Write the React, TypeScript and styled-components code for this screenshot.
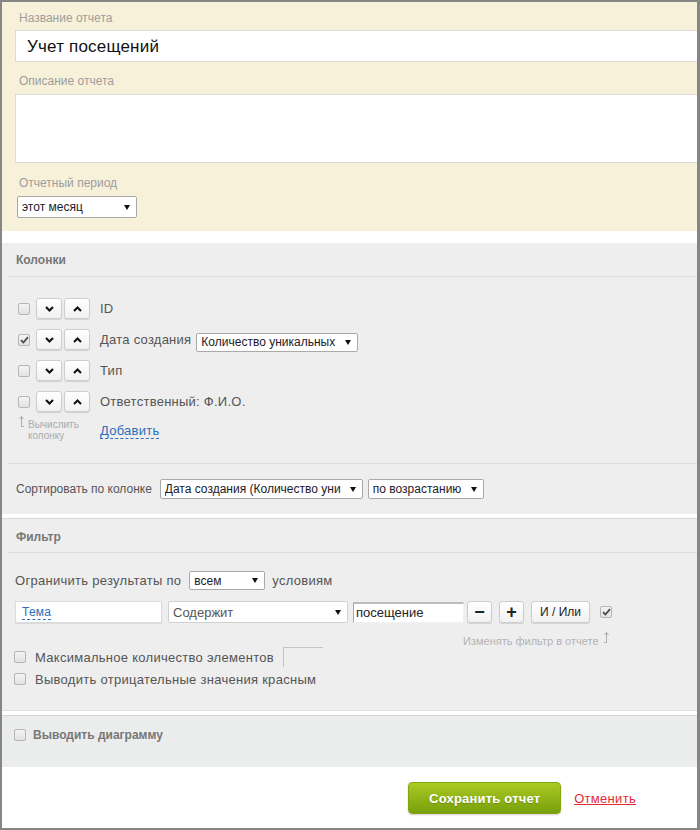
import React from 'react';
import styled, { createGlobalStyle } from 'styled-components';

const GlobalStyle = createGlobalStyle`
  html, body { margin: 0; padding: 0; background: #fff; }
  body { font-family: "Liberation Sans", Arial, sans-serif; }
  * { box-sizing: border-box; }
`;

const Frame = styled.div`
  width: 700px;
  height: 830px;
  border-style: solid;
  border-color: #868686;
  border-width: 2px 3px 2px 2px;
  display: flex;
  flex-direction: column;
  overflow: hidden;
  background: #fff;
`;

/* ---------- top (beige) block ---------- */
const TopSection = styled.section`
  background: #f8f1da;
  padding: 8px 0 13px 13px;
  display: flex;
  flex-direction: column;
  align-items: flex-start;
`;

const FieldLabel = styled.div<{ $top: number }>`
  margin-top: ${p => p.$top}px;
  padding-left: 4px;
  font-size: 12px;
  line-height: 16px;
  color: #9d9d9d;
`;

const TitleField = styled.div`
  width: 100%;
  height: 32px;
  margin-top: 4px;
  background: #fff;
  border: 1px solid #dedbd3;
  border-right: none;
  padding: 2px 0 0 11px;
  display: flex;
  align-items: center;
  font-size: 17px;
  letter-spacing: 0.2px;
  color: #111;
`;

const DescField = styled.div`
  width: 100%;
  height: 69px;
  margin-top: 5px;
  background: #fff;
  border: 1px solid #dedbd3;
  border-right: none;
`;

/* ---------- fake select ---------- */
const SelectBox = styled.div<{ $w: number; $h: number; $fs?: number; $color?: string; $border?: string; $ml?: number; $mt?: number }>`
  width: ${p => p.$w}px;
  height: ${p => p.$h}px;
  margin-left: ${p => p.$ml ?? 0}px;
  margin-top: ${p => p.$mt ?? 0}px;
  flex: none;
  display: flex;
  align-items: center;
  background: #fff;
  border: 1px solid ${p => p.$border ?? '#a9a9a9'};
  border-radius: 2px;
  padding: 0 6px 0 4px;
  font-size: ${p => p.$fs ?? 12}px;
  color: ${p => p.$color ?? '#1d1a2a'};
  white-space: nowrap;
  overflow: hidden;
`;

const SelectText = styled.span`
  flex: 1;
  min-width: 0;
  overflow: hidden;
`;

const CaretIcon = styled.svg`
  flex: none;
  margin-left: 4px;
`;

const Caret = () => (
  <CaretIcon width="6" height="5" viewBox="0 0 6 5">
    <path d="M0 0H6L3 5Z" fill="#111" />
  </CaretIcon>
);

const Select: React.FC<{ w: number; h: number; text: string; fs?: number; color?: string; border?: string; ml?: number; mt?: number }> = ({ w, h, text, fs, color, border, ml, mt }) => (
  <SelectBox $w={w} $h={h} $fs={fs} $color={color} $border={border} $ml={ml} $mt={mt}>
    <SelectText>{text}</SelectText>
    <Caret />
  </SelectBox>
);

/* ---------- checkbox ---------- */
const CheckBoxBox = styled.span`
  flex: none;
  width: 12px;
  height: 12px;
  border: 1px solid #b6b6b6;
  border-radius: 2px;
  background: linear-gradient(#f4f4f4, #e2e2e2);
  display: flex;
  align-items: center;
  justify-content: center;
`;

const CheckBox: React.FC<{ checked?: boolean }> = ({ checked }) => (
  <CheckBoxBox>
    {checked && (
      <svg width="9" height="8" viewBox="0 0 9 8">
        <path d="M1 4.2L3.4 6.5L8 1.2" fill="none" stroke="#4a4a4a" strokeWidth="1.8" />
      </svg>
    )}
  </CheckBoxBox>
);

/* ---------- panels ---------- */
const Panel = styled.section<{ $gap: number; $bg?: string; $borderTop?: string; $borderBottom?: string; $pb?: number }>`
  margin-top: ${p => p.$gap}px;
  background: ${p => p.$bg ?? '#eeeeee'};
  border-top: ${p => (p.$borderTop ? `1px solid ${p.$borderTop}` : 'none')};
  border-bottom: ${p => (p.$borderBottom ? `1px solid ${p.$borderBottom}` : 'none')};
  padding: 0 0 ${p => p.$pb ?? 0}px 6px;
`;

const PanelHeading = styled.h3<{ $pt: number; $pb: number }>`
  margin: 0;
  padding: ${p => p.$pt}px 0 ${p => p.$pb}px 8px;
  font-size: 12px;
  line-height: 14px;
  font-weight: bold;
  color: #777;
  border-bottom: 1px solid #dadada;
`;

/* ---------- columns ---------- */
const ColumnList = styled.div`
  padding: 16px 0 0 10px;
  display: flex;
  flex-direction: column;
`;

const ColumnRow = styled.div`
  height: 31px;
  display: flex;
  align-items: center;
`;

const OrderButtons = styled.div`
  display: flex;
  gap: 2px;
  margin: 0 10px 0 6px;
`;

const SmallButton = styled.span<{ $w: number; $h?: number; $fs?: number }>`
  flex: none;
  width: ${p => p.$w}px;
  height: ${p => p.$h ?? 21}px;
  display: flex;
  align-items: center;
  justify-content: center;
  border: 1px solid #cdcdcd;
  border-radius: 3px;
  background: linear-gradient(#ffffff, #f1f1f1);
  box-shadow: 0 1px 1px rgba(0, 0, 0, 0.12);
  font-size: ${p => p.$fs ?? 12}px;
  color: #222;
`;

const Chevron: React.FC<{ up?: boolean }> = ({ up }) => (
  <svg width="9" height="6" viewBox="0 0 9 6">
    <path d={up ? 'M1 5L4.5 1.5L8 5' : 'M1 1L4.5 4.5L8 1'} fill="none" stroke="#111" strokeWidth="2.1" />
  </svg>
);

const ColumnName = styled.span`
  font-size: 13px;
  letter-spacing: 0.25px;
  color: #555;
`;

const AddRow = styled.div`
  display: flex;
  align-items: flex-start;
  padding-left: 10px;
  height: 24px;
`;

const CalcHint = styled.div`
  width: 82px;
  display: flex;
  align-items: flex-start;
  font-size: 10px;
  line-height: 11px;
  color: #ababab;
`;

const HintArrowIcon = styled.svg<{ $mt?: number }>`
  flex: none;
  margin-top: ${p => p.$mt ?? 0}px;
`;

const CalcHintText = styled.div`
  padding-top: 2px;
`;

const DashedLink = styled.a<{ $fs: number; $mt?: number }>`
  display: inline-block;
  margin-top: ${p => p.$mt ?? 0}px;
  font-size: ${p => p.$fs}px;
  line-height: ${p => p.$fs + 2}px;
  letter-spacing: 0.25px;
  color: #2b6fbd;
  text-decoration: none;
  border-bottom: 1px dashed #2b6fbd;
`;

const SortBlock = styled.div`
  margin-top: 22px;
  border-top: 1px solid #dadada;
  padding: 15px 0 15px 8px;
  display: flex;
  align-items: center;
`;

const PlainText = styled.span<{ $fs: number; $mr?: number; $ml?: number }>`
  font-size: ${p => p.$fs}px;
  letter-spacing: ${p => (p.$fs >= 13 ? 0.28 : 0)}px;
  color: #555;
  margin-right: ${p => p.$mr ?? 0}px;
  margin-left: ${p => p.$ml ?? 0}px;
  white-space: nowrap;
`;

/* ---------- filter ---------- */
const FilterBody = styled.div`
  padding-left: 7px;
  display: flex;
  flex-direction: column;
`;

const LimitRow = styled.div`
  margin-top: 18px;
  height: 19px;
  display: flex;
  align-items: center;
`;

const FilterRow = styled.div`
  margin-top: 11px;
  height: 22px;
  display: flex;
  align-items: center;
`;

const FieldBox = styled.div`
  width: 147px;
  height: 22px;
  flex: none;
  background: #fff;
  border: 1px solid #dcdcdc;
  box-shadow: 0 1px 1px rgba(0, 0, 0, 0.08);
  padding-left: 6px;
  display: flex;
  align-items: center;
`;

const ValueInput = styled.div`
  width: 111px;
  height: 21px;
  flex: none;
  margin-left: 5px;
  background: #fff;
  border-style: solid;
  border-width: 2px 1px 1px 1px;
  border-color: #bcbcbc #f2f2f2 #f2f2f2 #a9a9a9;
  padding-left: 2px;
  display: flex;
  align-items: center;
  font-size: 13px;
  color: #222;
`;

const ButtonGroup = styled.div`
  display: flex;
  gap: 7px;
  margin-left: 3px;
  margin-right: 10px;
`;

const HintRow = styled.div`
  margin-top: 8px;
  margin-left: 448px;
  height: 16px;
  display: flex;
  align-items: flex-start;
  gap: 1px;
`;

const HintText = styled.span`
  margin-top: 4px;
  font-size: 11px;
  line-height: 12px;
  color: #b3b3b3;
`;

const OptionRow = styled.div<{ $mt: number }>`
  margin-top: ${p => p.$mt}px;
  height: 20px;
  display: flex;
  align-items: center;
  margin-left: -1px;
`;

const CountInput = styled.span`
  width: 40px;
  height: 20px;
  margin-left: 9px;
  border-top: 1px solid #c4c4c4;
  border-left: 1px solid #c4c4c4;
`;

/* ---------- diagram ---------- */
const DiagramRow = styled.div`
  padding: 12px 0 25px 6px;
  display: flex;
  align-items: center;
  gap: 7px;
`;

const DiagramLabel = styled.span`
  font-size: 12px;
  line-height: 14px;
  font-weight: bold;
  color: #777;
`;

/* ---------- footer ---------- */
const Footer = styled.footer`
  flex: 1;
  display: flex;
  align-items: flex-start;
  justify-content: flex-end;
  padding: 15px 61px 0 0;
  gap: 13px;
`;

const SaveButton = styled.span`
  width: 153px;
  height: 32px;
  display: flex;
  align-items: center;
  justify-content: center;
  border-radius: 4px;
  border: 1px solid #84a512;
  background: linear-gradient(#abca22, #77a00c);
  box-shadow: 0 1px 2px rgba(0, 0, 0, 0.2);
  color: #fff;
  font-size: 13px;
  font-weight: bold;
  letter-spacing: 0.2px;
  text-shadow: 0 1px 1px rgba(0, 0, 0, 0.2);
`;

const CancelLink = styled.a`
  height: 32px;
  display: flex;
  align-items: center;
  font-size: 13px;
  letter-spacing: 0.3px;
  color: #e32b33;
  text-decoration: underline;
`;

const UpHook: React.FC<{ side: 'left' | 'right'; mt?: number }> = ({ side, mt }) => (
  <HintArrowIcon width="10" height="13" viewBox="0 0 10 13" $mt={mt}>
    {side === 'right' ? (
      <path d="M3.5 1.5V11.5H6M1.5 4L3.5 1.5L5.5 4" fill="none" stroke="#ababab" strokeWidth="1" />
    ) : (
      <path d="M6.5 1.5V11.5H4M4.5 4L6.5 1.5L8.5 4" fill="none" stroke="#ababab" strokeWidth="1" />
    )}
  </HintArrowIcon>
);

const columns = [
  { name: 'ID', checked: false },
  { name: 'Дата создания', checked: true, select: 'Количество уникальных' },
  { name: 'Тип', checked: false },
  { name: 'Ответственный: Ф.И.О.', checked: false },
];

export default function App() {
  return (
    <>
      <GlobalStyle />
      <Frame>
        <TopSection>
          <FieldLabel $top={0}>Название отчета</FieldLabel>
          <TitleField>Учет посещений</TitleField>
          <FieldLabel $top={11}>Описание отчета</FieldLabel>
          <DescField />
          <FieldLabel $top={12}>Отчетный период</FieldLabel>
          <Select w={120} h={22} text="этот месяц" ml={2} mt={5} />
        </TopSection>

        <Panel $gap={12}>
          <PanelHeading $pt={10} $pb={9}>Колонки</PanelHeading>
          <ColumnList>
            {columns.map(c => (
              <ColumnRow key={c.name}>
                <CheckBox checked={c.checked} />
                <OrderButtons>
                  <SmallButton $w={26}><Chevron /></SmallButton>
                  <SmallButton $w={26}><Chevron up /></SmallButton>
                </OrderButtons>
                <ColumnName>{c.name}</ColumnName>
                {c.select && <Select w={162} h={19} text={c.select} ml={5} mt={5} />}
              </ColumnRow>
            ))}
          </ColumnList>
          <AddRow>
            <CalcHint>
              <UpHook side="right" mt={-2} />
              <CalcHintText>Вычислить<br />колонку</CalcHintText>
            </CalcHint>
            <DashedLink $fs={13} $mt={6}>Добавить</DashedLink>
          </AddRow>
          <SortBlock>
            <PlainText $fs={12} $mr={8}>Сортировать по колонке</PlainText>
            <Select w={203} h={20} text="Дата создания (Количество уни" />
            <Select w={116} h={20} text="по возрастанию" ml={5} />
          </SortBlock>
        </Panel>

        <Panel $gap={4} $borderTop="#d8d8d8" $borderBottom="#dfe2e2" $pb={21}>
          <PanelHeading $pt={11} $pb={8}>Фильтр</PanelHeading>
          <FilterBody>
            <LimitRow>
              <PlainText $fs={13} $mr={8}>Ограничить результаты по</PlainText>
              <Select w={76} h={19} text="всем" />
              <PlainText $fs={13} $ml={7}>условиям</PlainText>
            </LimitRow>
            <FilterRow>
              <FieldBox><DashedLink $fs={12}>Тема</DashedLink></FieldBox>
              <Select w={180} h={22} text="Содержит" fs={13} color="#555" border="#d0d0d0" ml={6} />
              <ValueInput>посещение</ValueInput>
              <ButtonGroup>
                <SmallButton $w={25} $h={22} $fs={18}><b>−</b></SmallButton>
                <SmallButton $w={25} $h={22} $fs={18}><b>+</b></SmallButton>
                <SmallButton $w={59} $h={22} $fs={12}>И / Или</SmallButton>
              </ButtonGroup>
              <CheckBox checked />
            </FilterRow>
            <HintRow>
              <HintText>Изменять фильтр в отчете</HintText>
              <UpHook side="left" />
            </HintRow>
            <OptionRow $mt={0}>
              <CheckBox />
              <PlainText $fs={13} $ml={9}>Максимальное количество элементов</PlainText>
              <CountInput />
            </OptionRow>
            <OptionRow $mt={2}>
              <CheckBox />
              <PlainText $fs={13} $ml={9}>Выводить отрицательные значения красным</PlainText>
            </OptionRow>
          </FilterBody>
        </Panel>

        <Panel $gap={4} $bg="#ebeded" $borderTop="#d4d8d8">
          <DiagramRow>
            <CheckBox />
            <DiagramLabel>Выводить диаграмму</DiagramLabel>
          </DiagramRow>
        </Panel>

        <Footer>
          <SaveButton>Сохранить отчет</SaveButton>
          <CancelLink>Отменить</CancelLink>
        </Footer>
      </Frame>
    </>
  );
}
